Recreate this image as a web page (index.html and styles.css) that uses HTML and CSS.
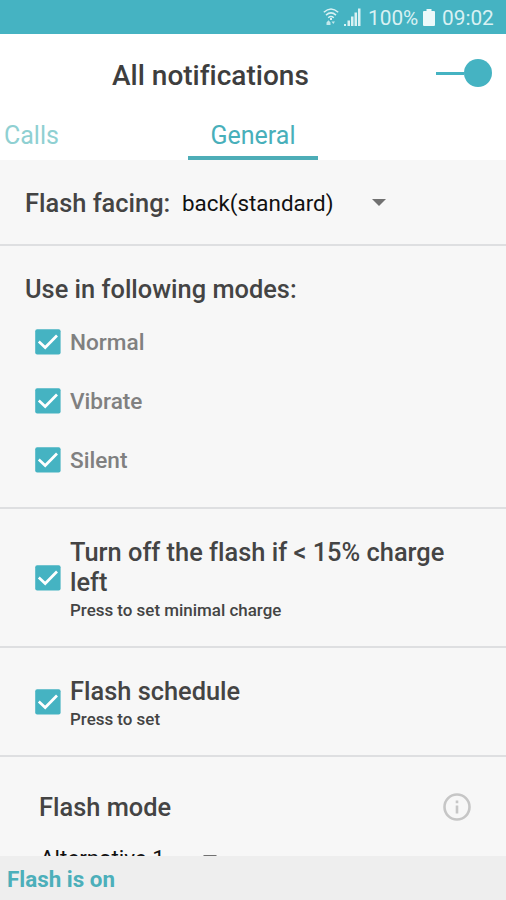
FILE: index.html
```html
<!DOCTYPE html>
<html lang="en">
<head>
<meta charset="utf-8">
<title>All notifications</title>
<link rel="stylesheet" href="styles.css">
</head>
<body>
<svg class="defs" width="0" height="0">
  <symbol id="check" viewBox="0 0 26 26"><rect x=".2" y=".2" width="25.4" height="25.4" rx="2" fill="#45b3c2"/><path d="M3.800 12.600l6.400 5.900L22 6.500" fill="none" stroke="#fff" stroke-width="2.700"/></symbol>
</svg>
<div class="screen">
  <div class="status">
    <svg class="wifi" width="16" height="18" viewBox="0 0 16 18" fill="none" stroke="#d9f1f3" stroke-width="1.5">
      <path d="M.8 4.300Q8-2.400 15.200 4.300M3 7.100Q8 2.600 13 7.100M5.200 9.700Q8 7.300 10.800 9.700"/>
      <path d="M8 10v2" stroke-width="2"/>
      <path d="M3.500 14.500L5.500 12.200 7.500 14.500V17H3.500zM8.500 13.500H12L10.300 16z" fill="#d9f1f3" stroke="none" opacity=".85"/>
    </svg>
    <svg class="signal" width="17" height="18" viewBox="0 0 17 18" fill="#d9f1f3"><path d="M0 16h2v2H0zM3.500 12.500h2.500V18H3.500zM7 8.500h2.500V18H7zM10.500 4.500H13V18h-2.500zM14 .5h2.500V18H14z"/></svg>
    <span class="percent">100%</span>
    <svg class="battery" width="12" height="17" viewBox="0 0 12 17" fill="#ecf9fa"><path d="M3.500 0h5v2H11q1 0 1 1v13q0 1-1 1H1q-1 0-1-1V3q0-1 1-1h2.500z"/></svg>
    <span class="clock">09:02</span>
  </div>
  <header class="header">
    <h1 class="title">All notifications</h1>
    <div class="switch"><span class="track"></span><span class="thumb"></span></div>
  </header>
  <nav class="tabs">
    <div class="tab calls">Calls</div>
    <div class="tab active">General</div>
  </nav>
  <main class="content">
    <section class="row facing">
      <span class="heading facing-label">Flash facing:</span>
      <span class="value">back(standard)</span>
      <svg class="caret" width="14" height="7" viewBox="0 0 14 7"><path d="M0 0h14L7 7z" fill="#717171"/></svg>
    </section>
    <section class="row modes">
      <h2 class="heading modes-title">Use in following modes:</h2>
      <div class="mode"><svg class="box"><use href="#check"/></svg><span class="mode-name">Normal</span></div>
      <div class="mode"><svg class="box"><use href="#check"/></svg><span class="mode-name">Vibrate</span></div>
      <div class="mode"><svg class="box"><use href="#check"/></svg><span class="mode-name">Silent</span></div>
    </section>
    <section class="row option charge">
      <svg class="box"><use href="#check"/></svg>
      <div class="text"><h2 class="heading">Turn off the flash if &lt; 15% charge<br>left</h2><p class="note">Press to set minimal charge</p></div>
    </section>
    <section class="row option schedule">
      <svg class="box"><use href="#check"/></svg>
      <div class="text"><h2 class="heading">Flash schedule</h2><p class="note">Press to set</p></div>
    </section>
    <section class="flashmode">
      <div class="mode-head">
        <h2 class="heading">Flash mode</h2>
        <svg class="info" width="30" height="30" viewBox="0 0 30 30"><circle cx="15" cy="15" r="12.500" fill="none" stroke="#c6c6c6" stroke-width="2.600"/><path d="M15 13.500v8M15 8.500v2.700" stroke="#c6c6c6" stroke-width="2.600"/></svg>
      </div>
      <div class="select"><span class="value alt">Alternative 1</span><svg class="caret" width="14" height="7" viewBox="0 0 14 7"><path d="M0 0h14L7 7z" fill="#717171"/></svg></div>
    </section>
  </main>
  <footer class="footer">Flash is on</footer>
</div>
</body>
</html>
```

FILE: styles.css
```css
* { box-sizing: border-box; }
body { margin: 0; font-family: Roboto, "Liberation Sans", sans-serif; font-variant-ligatures: none; }
h1, h2, p { margin: 0; font-weight: 500; }
h1, h2, span { white-space: nowrap; }
svg { flex: none; display: block; }
.defs { position: absolute; }
.screen { width: 506px; height: 900px; display: flex; flex-direction: column; overflow: hidden; background: #f7f7f7; }
.status { height: 34px; flex: none; background: #45b3c2; display: flex; align-items: center; justify-content: flex-end; padding-right: 10px; color: #d9f1f3; font-size: 20.8px; line-height: 34px; }
.wifi { margin: 0 5px 1px 0; }
.signal { margin-right: 7px; }
.percent { width: 52px; padding-top: 1px; }
.battery { margin: 0 7px 0 3px; }
.clock { padding-top: 1px; width: 54px; }
.header { height: 77px; flex: none; background: #fff; display: flex; justify-content: space-between; padding: 0 14px 0 112px; }
.title { font-size: 28px; line-height: 32px; padding-top: 26px; color: #3e3e3e; }
.switch { display: flex; align-items: center; height: 28px; margin-top: 25px; }
.track { width: 28px; height: 3px; background: #45b3c2; }
.thumb { width: 28px; height: 28px; border-radius: 50%; background: #45b3c2; }
.tabs { height: 49px; flex: none; background: #fff; display: flex; font-size: 25px; line-height: 49px; }
.tab { height: 49px; }
.calls { width: 188px; padding-left: 4px; color: #8fd0d2; }
.active { width: 130px; text-align: center; color: #48afba; border-bottom: 4px solid #4dadb7; }
.content { flex: 1; min-height: 0; overflow: hidden; }
.row { border-bottom: 2px solid #dedfe1; }
.heading { font-size: 25.4px; line-height: 30px; color: #444; font-weight: 500; }
.facing { height: 86px; display: flex; align-items: center; padding-left: 25px; }
.facing-label { width: 157px; padding-top: 1px; }
.value { font-size: 22.4px; line-height: 30px; color: #111; width: 190px; padding-top: 2px; }
.modes { height: 263px; padding: 28px 0 0 25px; }
.modes-title { margin-bottom: 8px; }
.mode { height: 59px; display: flex; align-items: center; padding-left: 10px; gap: 9px; font-size: 22.6px; font-weight: 500; color: #808080; }
.mode-name { padding-top: 1px; }
.box { width: 26px; height: 26px; }
.option { display: flex; align-items: center; padding-left: 35px; gap: 9px; }
.text { padding-top: 4px; }
.charge { height: 139px; }
.schedule { height: 109px; }
.note { font-size: 16.95px; line-height: 26px; color: #444; }
.flashmode { padding-top: 35px; }
.mode-head { height: 30px; display: flex; justify-content: space-between; align-items: center; padding: 0 34px 0 39px; }
.info { margin-bottom: 1px; }
.select { display: flex; align-items: flex-start; padding: 19px 0 0 40px; }
.select .alt { width: 163px; }
.select .caret { margin-top: 14px; }
.footer { height: 44px; flex: none; background: #eee; color: #4cafba; font-size: 22.4px; font-weight: 700; line-height: 46px; padding-left: 7px; }
```
